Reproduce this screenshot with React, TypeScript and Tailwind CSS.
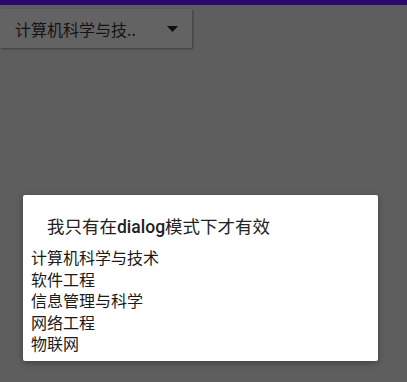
const majors = ["计算机科学与技术", "软件工程", "信息管理与科学", "网络工程", "物联网"];

const cjk = { fontFamily: '"Noto Sans CJK SC", Roboto, sans-serif' };

export default function App() {
  return (
    <div className="flex h-[382px] w-[407px] flex-col overflow-hidden bg-[#5e5e5e]" style={cjk}>
      {/* status bar under the dim */}
      <div className="h-[5px] w-full bg-[#2a0870]" />

      {/* spinner */}
      <div className="mt-[4px] flex h-[39px] w-[192px] items-center justify-between bg-[#636363] pl-[15px] pr-[14px] shadow-[1px_1px_2px_rgba(0,0,0,0.35)]">
        <span className="text-[16px] leading-none text-[#141414]">计算机科学与技..</span>
        <svg width="11" height="6" viewBox="0 0 11 6" className="mt-[1px]">
          <path d="M0 0h11L5.5 6z" fill="#0f0f0f" />
        </svg>
      </div>

      {/* dialog */}
      <div className="ml-[23px] mt-[147px] w-[355px] rounded-[2px] bg-white pb-[6px] pt-[19px] shadow-[0_2px_6px_rgba(0,0,0,0.3)]">
        <div className="pl-[24px] text-[17.5px] leading-[24px] text-[#222]">
          我只有在<span className="font-medium" style={{ fontFamily: "Roboto, sans-serif" }}>dialog</span>模式下才有效
        </div>
        <ul className="mt-[8px] pl-[8px]">
          {majors.map((m) => (
            <li key={m} className="text-[16px] leading-[21.5px] text-[#1a1a1a]">
              {m}
            </li>
          ))}
        </ul>
      </div>
    </div>
  );
}
